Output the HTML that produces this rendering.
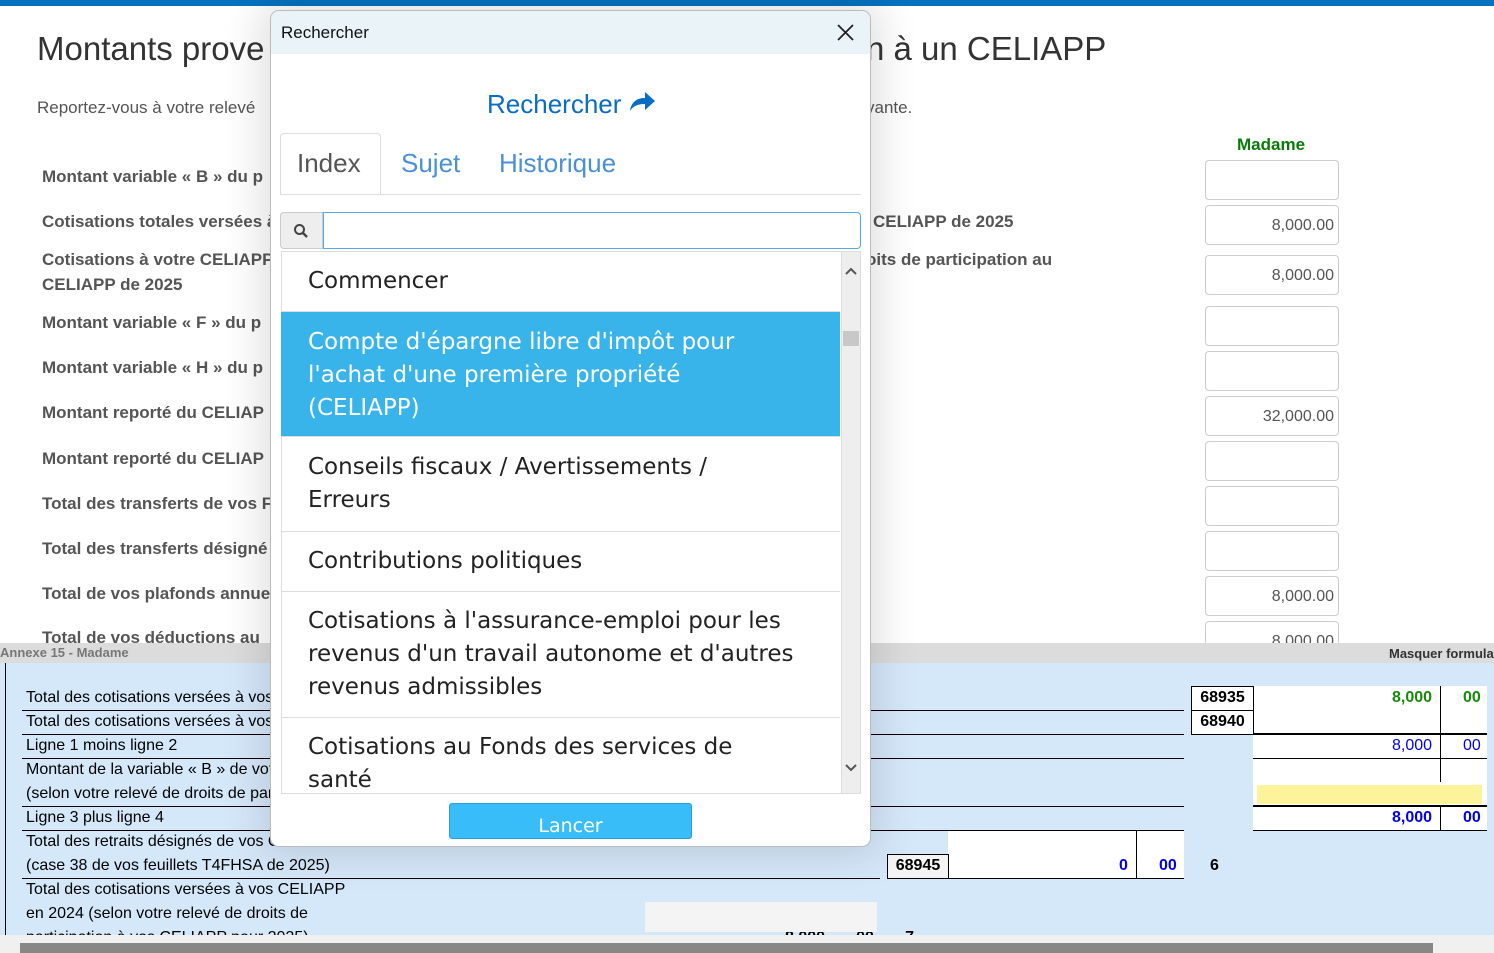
<!DOCTYPE html>
<html><head><meta charset="utf-8"><style>
*{margin:0;padding:0;box-sizing:border-box}
body{width:1494px;height:953px;position:relative;overflow:hidden;background:#fff;font-family:"Liberation Sans",sans-serif}
.a{position:absolute;white-space:nowrap}
.lbl{font-size:17px;font-weight:bold;color:#555}
.inp{position:absolute;left:1205px;width:134px;height:40px;border:1px solid #ccc;border-radius:4px;background:#fff;font-size:16px;color:#555;text-align:right;padding:11px 4px 0 0}
.t{font-size:16px;color:#000}
.hl{position:absolute;height:1px;background:#000}
.box{position:absolute;border:1px solid #000;background:#fff;font-size:16px;font-weight:bold;text-align:center;line-height:22px}
.item{position:absolute;left:281px;width:559px;font-family:"DejaVu Sans",sans-serif;font-size:23px;line-height:33px;color:#222;padding-left:27px;border-bottom:1px solid #ddd}
</style></head><body>
<div class="a" style="left:0;top:0;width:1494px;height:6px;background:#0672c0"></div>
<div class="a" style="left:37px;top:30px;font-size:33px;color:#333">Montants prove</div>
<div class="a" style="left:866px;top:30px;font-size:33px;color:#333">n à un CELIAPP</div>
<div class="a" style="left:37px;top:98px;font-size:17px;color:#555">Reportez-vous à votre relevé</div>
<div class="a" style="left:866px;top:98px;font-size:17px;color:#555">vante.</div>
<div class="a" style="left:1237px;top:135px;font-size:17px;font-weight:bold;color:#0a7a0a">Madame</div>
<div class="a lbl" style="left:42px;top:167px">Montant variable « B » du p</div>
<div class="a lbl" style="left:42px;top:212px">Cotisations totales versées à</div>
<div class="a lbl" style="left:873px;top:212px">CELIAPP de 2025</div>
<div class="a lbl" style="left:42px;top:250px">Cotisations à votre CELIAPP</div>
<div class="a lbl" style="left:866px;top:250px">oits de participation au</div>
<div class="a lbl" style="left:42px;top:275px">CELIAPP de 2025</div>
<div class="a lbl" style="left:42px;top:313px">Montant variable « F » du p</div>
<div class="a lbl" style="left:42px;top:358px">Montant variable « H » du p</div>
<div class="a lbl" style="left:42px;top:403px">Montant reporté du CELIAP</div>
<div class="a lbl" style="left:42px;top:449px">Montant reporté du CELIAP</div>
<div class="a lbl" style="left:42px;top:494px">Total des transferts de vos F</div>
<div class="a lbl" style="left:42px;top:539px">Total des transferts désigné</div>
<div class="a lbl" style="left:42px;top:584px">Total de vos plafonds annue</div>
<div class="a lbl" style="left:42px;top:628px">Total de vos déductions au</div>
<div class="inp" style="top:160px"></div>
<div class="inp" style="top:205px">8,000.00</div>
<div class="inp" style="top:255px">8,000.00</div>
<div class="inp" style="top:306px"></div>
<div class="inp" style="top:351px"></div>
<div class="inp" style="top:396px">32,000.00</div>
<div class="inp" style="top:441px"></div>
<div class="inp" style="top:486px"></div>
<div class="inp" style="top:531px"></div>
<div class="inp" style="top:576px">8,000.00</div>
<div class="inp" style="top:621px">8,000.00</div>

<div class="a" style="left:0;top:643px;width:1494px;height:20px;background:#dcdcdc"></div>
<div class="a" style="left:0;top:645px;font-size:13px;font-weight:bold;color:#777">Annexe 15 - Madame</div>
<div class="a" style="left:1389px;top:646px;font-size:13px;font-weight:bold;color:#333">Masquer formula</div>
<div class="a" style="left:0;top:663px;width:1494px;height:272px;background:#d5e8fa;overflow:hidden">
<div class="a t" style="left:26px;top:266px">participation à vos CELIAPP pour 2025)</div>
<div class="a t" style="left:785px;top:266px;font-weight:bold">8,000&nbsp;&nbsp;&nbsp;&nbsp;&nbsp;&nbsp;&nbsp;00&nbsp;&nbsp;&nbsp;&nbsp;&nbsp;&nbsp;&nbsp;7</div>
</div>
<div class="a" style="left:5px;top:663px;width:1px;height:272px;background:#000"></div>
<div class="a t" style="left:26px;top:689px">Total des cotisations versées à vos CELIAPP</div>
<div class="a t" style="left:26px;top:713px">Total des cotisations versées à vos CELIAPP</div>
<div class="a t" style="left:26px;top:737px">Ligne 1 moins ligne 2</div>
<div class="a t" style="left:26px;top:761px">Montant de la variable « B » de votre</div>
<div class="a t" style="left:26px;top:785px">(selon votre relevé de droits de participation</div>
<div class="a t" style="left:26px;top:809px">Ligne 3 plus ligne 4</div>
<div class="a t" style="left:26px;top:833px">Total des retraits désignés de vos CELIAPP en 2025</div>
<div class="a t" style="left:26px;top:857px">(case 38 de vos feuillets T4FHSA de 2025)</div>
<div class="a t" style="left:26px;top:881px">Total des cotisations versées à vos CELIAPP</div>
<div class="a t" style="left:26px;top:905px">en 2024 (selon votre relevé de droits de</div>
<div class="hl" style="left:22px;top:710px;width:1162px"></div>
<div class="hl" style="left:22px;top:734px;width:1162px"></div>
<div class="hl" style="left:22px;top:758px;width:1162px"></div>
<div class="hl" style="left:22px;top:806px;width:1162px"></div>
<div class="hl" style="left:22px;top:830px;width:1162px"></div>
<div class="hl" style="left:22px;top:878px;width:858px"></div>
<div class="a" style="left:1253px;top:686px;width:234px;height:144px;background:#fff"></div>
<div class="a" style="left:1440px;top:686px;width:1px;height:96px;background:#000"></div>
<div class="a" style="left:1440px;top:806px;width:1px;height:24px;background:#000"></div>
<div class="hl" style="left:1253px;top:733px;width:234px;height:2px"></div>
<div class="hl" style="left:1253px;top:758px;width:234px"></div>
<div class="hl" style="left:1253px;top:805px;width:234px;height:2px"></div>
<div class="hl" style="left:1253px;top:830px;width:234px"></div>
<div class="a" style="left:1257px;top:785px;width:225px;height:19px;background:#fdf39a"></div>
<div class="box" style="left:1191px;top:686px;width:63px;height:25px">68935</div>
<div class="box" style="left:1191px;top:710px;width:63px;height:25px">68940</div>
<div class="a" style="left:1392px;top:689px;font-size:16px;font-weight:bold;color:#188a0a">8,000</div>
<div class="a" style="left:1463px;top:689px;font-size:16px;font-weight:bold;color:#188a0a">00</div>
<div class="a" style="left:1392px;top:737px;font-size:16px;color:#0000ee">8,000</div>
<div class="a" style="left:1463px;top:737px;font-size:16px;color:#0000ee">00</div>
<div class="a" style="left:1392px;top:809px;font-size:16px;font-weight:bold;color:#0000ee">8,000</div>
<div class="a" style="left:1463px;top:809px;font-size:16px;font-weight:bold;color:#0000ee">00</div>
<div class="a" style="left:948px;top:831px;width:236px;height:47px;background:#fff"></div>
<div class="a" style="left:1136px;top:831px;width:1px;height:47px;background:#000"></div>
<div class="hl" style="left:948px;top:878px;width:236px"></div>
<div class="box" style="left:887px;top:854px;width:62px;height:25px;background:#f4f4f4">68945</div>
<div class="a" style="left:1119px;top:857px;font-size:16px;font-weight:bold;color:#0000ee">0</div>
<div class="a" style="left:1159px;top:857px;font-size:16px;font-weight:bold;color:#0000ee">00</div>
<div class="a" style="left:1210px;top:857px;font-size:16px;font-weight:bold">6</div>
<div class="a" style="left:645px;top:902px;width:232px;height:30px;background:#f4f4f4"></div>
<div class="a" style="left:0;top:935px;width:1494px;height:18px;background:#f0f0f0"></div>
<div class="a" style="left:20px;top:943px;width:1413px;height:10px;background:#878787"></div>

<!-- modal -->
<div class="a" style="left:270px;top:10px;width:601px;height:837px;background:#fff;border:1px solid #bbb;border-radius:9px;box-shadow:0 0 40px 10px rgba(0,0,0,0.12);overflow:hidden">
<div class="a" style="left:0;top:0;width:600px;height:43px;background:#eaf3f8"></div>
<div class="a" style="left:10px;top:12px;font-size:17px;color:#111">Rechercher</div>
<svg class="a" style="left:566px;top:13px" width="17" height="17" viewBox="0 0 17 17"><path d="M1 1L16 16M16 1L1 16" stroke="#222" stroke-width="1.8"/></svg>
<div class="a" style="left:216px;top:78px;font-size:26px;color:#0a6cc4">Rechercher</div>
<svg class="a" style="left:357px;top:80px" width="28" height="22" viewBox="0 0 28 22"><path d="M2 20C3 11 9 7 17 7V1L27 10L17 19V13C10 13 5 15 2 20Z" fill="#0a6cc4"/></svg>
<div class="a" style="left:9px;top:122px;width:101px;height:62px;border:1px solid #ddd;border-bottom:none;border-radius:4px 4px 0 0;background:#fff"></div>
<div class="a" style="left:9px;top:183px;width:581px;height:1px;background:#ddd"></div>
<div class="a" style="left:26px;top:137px;font-size:26px;color:#555">Index</div>
<div class="a" style="left:130px;top:137px;font-size:26px;color:#4a90d9">Sujet</div>
<div class="a" style="left:228px;top:137px;font-size:26px;color:#4a90d9">Historique</div>
<div class="a" style="left:9px;top:201px;width:43px;height:37px;background:#eee;border:1px solid #ccc;border-radius:4px 0 0 4px"></div>
<svg class="a" style="left:22px;top:212px" width="16" height="16" viewBox="0 0 16 16"><circle cx="6.5" cy="6.5" r="4.5" fill="none" stroke="#444" stroke-width="2"/><path d="M10 10L14 14" stroke="#444" stroke-width="2.4"/></svg>
<div class="a" style="left:52px;top:201px;width:538px;height:37px;border:1px solid #5aa7e8;border-radius:0 4px 4px 0"></div>
<div class="a" style="left:10px;top:240px;width:580px;height:543px;border:1px solid #ddd"></div>
<div class="a" style="left:570px;top:241px;width:19px;height:541px;background:#eee;border-left:1px solid #ddd"></div>
<svg class="a" style="left:574px;top:256px" width="12" height="8" viewBox="0 0 12 8"><path d="M1 7L6 2L11 7" fill="none" stroke="#555" stroke-width="2"/></svg>
<div class="a" style="left:572px;top:320px;width:16px;height:15px;background:#c8c8c8"></div>
<svg class="a" style="left:574px;top:753px" width="12" height="8" viewBox="0 0 12 8"><path d="M1 1L6 6L11 1" fill="none" stroke="#555" stroke-width="2"/></svg>
</div>
<div style="position:absolute;left:0;top:0;width:1494px;height:953px;overflow:visible">
<div style="position:absolute;left:281px;top:251px;width:559px;height:541px;overflow:hidden">
<div class="item" style="left:0;top:0;height:61px;padding-top:14px">Commencer</div>
<div class="item" style="left:0;top:61px;height:125px;padding-top:14px;background:#38b4eb;color:#fff">Compte d'épargne libre d'impôt pour<br>l'achat d'une première propriété<br>(CELIAPP)</div>
<div class="item" style="left:0;top:186px;height:95px;padding-top:14px">Conseils fiscaux / Avertissements /<br>Erreurs</div>
<div class="item" style="left:0;top:281px;height:60px;padding-top:13px">Contributions politiques</div>
<div class="item" style="left:0;top:341px;height:126px;padding-top:13px">Cotisations à l'assurance-emploi pour les<br>revenus d'un travail autonome et d'autres<br>revenus admissibles</div>
<div class="item" style="left:0;top:467px;height:100px;padding-top:13px;border:none">Cotisations au Fonds des services de<br>santé</div>
</div>
<div class="a" style="left:449px;top:803px;width:243px;height:36px;background:#38bdf8;border:1px solid #2a9ed8;border-radius:3px;color:#fff;font-family:'DejaVu Sans',sans-serif;font-size:19px;text-align:center;padding-top:10px;line-height:24px">Lancer</div>
</div>
</body></html>
